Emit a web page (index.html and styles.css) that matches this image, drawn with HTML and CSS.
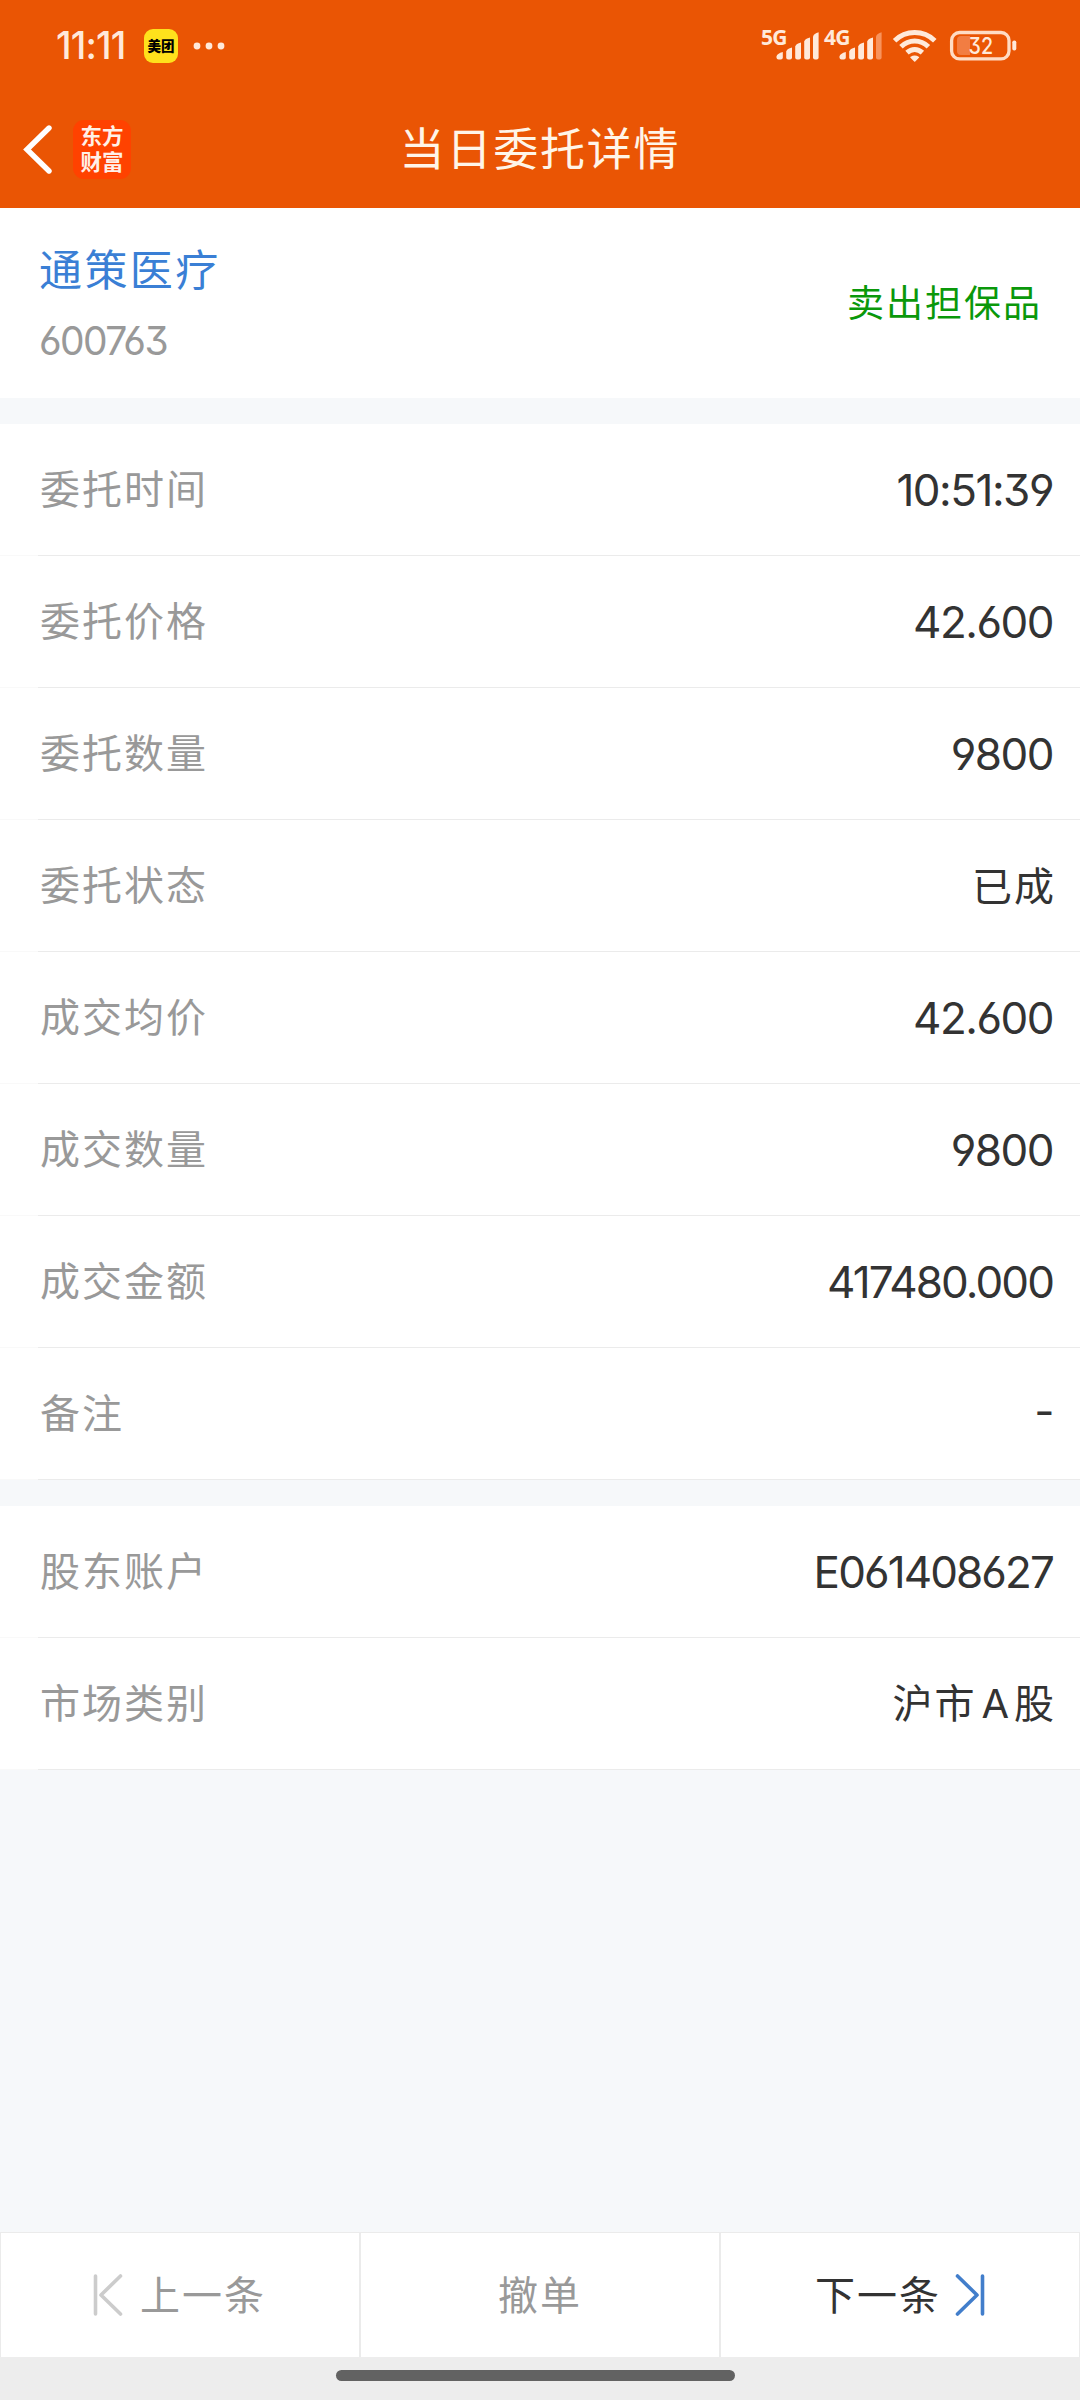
FILE: index.html
```html
<!DOCTYPE html>
<html lang="zh-CN">
<head>
<meta charset="utf-8">
<title>当日委托详情</title>
<link rel="stylesheet" href="styles.css">
</head>
<body>
<div class="screen">
  <header class="top">
    <div class="status">
      <div class="status-left">
        <span class="clock">11:11</span>
        <span class="meituan">美团</span>
        <svg class="dots" width="32" height="8" viewBox="0 0 32 8"><circle cx="4" cy="4" r="3.4"/><circle cx="16" cy="4" r="3.4"/><circle cx="28" cy="4" r="3.4"/></svg>
      </div>
      <svg class="status-right" width="260" height="52" viewBox="760 20 260 52">
        <g class="net"><text x="761" y="45" textLength="26.5">5G</text><text x="824" y="45" textLength="26.5">4G</text></g>
        <g class="bars">
          <path d="M776.5 56.5Q777 53.5 782.8 52V57.5Q782.8 59.5 780.8 59.5H778.5Q776.5 59.5 776.5 57.5Z"/>
          <path d="M786.2 51.5Q787 48.5 792 47.5V57.5Q792 59.5 790 59.5H788.2Q786.2 59.5 786.2 57.5Z"/>
          <path d="M795.2 46.5Q796 43.5 801 42.5V57.5Q801 59.5 799 59.5H797.2Q795.2 59.5 795.2 57.5Z"/>
          <path d="M804.2 41.5Q805 38.5 810 37.5V57.5Q810 59.5 808 59.5H806.2Q804.2 59.5 804.2 57.5Z"/>
          <path d="M813 36.5Q814 33.5 818.6 32.3V57.5Q818.6 59.5 816.6 59.5H815Q813 59.5 813 57.5Z"/>
          <path d="M839.5 56.5Q840 53.5 845.8 52V57.5Q845.8 59.5 843.8 59.5H841.5Q839.5 59.5 839.5 57.5Z"/>
          <path d="M849.2 51.5Q850 48.5 855 47.5V57.5Q855 59.5 853 59.5H851.2Q849.2 59.5 849.2 57.5Z"/>
          <path d="M858.2 46.5Q859 43.5 864 42.5V57.5Q864 59.5 862 59.5H860.2Q858.2 59.5 858.2 57.5Z"/>
          <path d="M867.2 41.5Q868 38.5 873 37.5V57.5Q873 59.5 871 59.5H869.2Q867.2 59.5 867.2 57.5Z"/>
          <path class="dim" d="M876 36.5Q877 33.5 881.6 32.3V57.5Q881.6 59.5 879.6 59.5H878Q876 59.5 876 57.5Z"/>
        </g>
        <g class="wifi">
          <path d="M894.6 40.8Q903 32.6 914.7 32.6T934.8 40.8"/>
          <path d="M901 46.8Q907 41 914.7 41T928.4 46.8"/>
          <path d="M907 52.6Q910.5 49.4 914.7 49.4T922.4 52.6"/>
          <path class="wifi-dot" d="M911 57.3Q914.7 55.4 918.4 57.3L914.7 61Z"/>
        </g>
        <rect class="cell" x="951.6" y="32.5" width="57.4" height="26.4" rx="8"/>
        <path class="charge" d="M961 36H970V55H961Q957 55 957 51V40Q957 36 961 36Z"/>
        <rect class="tip" x="1012.3" y="40.5" width="4" height="10" rx="1.8"/>
        <text class="level" x="968.6" y="54" textLength="24.5" lengthAdjust="spacingAndGlyphs">32</text>
      </svg>
    </div>
    <div class="nav">
      <div class="nav-left">
        <svg class="back" width="30" height="50" viewBox="0 0 30 50"><path d="M26 4L4 25.5L26 47"/></svg>
        <span class="app">东方财富</span>
      </div>
      <h1 class="title">当日委托详情</h1>
      <div class="nav-right"></div>
    </div>
  </header>

  <section class="stock">
    <div class="stock-id">
      <span class="stock-name">通策医疗</span>
      <span class="stock-code">600763</span>
    </div>
    <span class="side">卖出担保品</span>
  </section>

  <section class="group">
    <div class="row"><span class="label">委托时间</span><span class="value">10:51:39</span></div>
    <div class="row"><span class="label">委托价格</span><span class="value">42.600</span></div>
    <div class="row"><span class="label">委托数量</span><span class="value">9800</span></div>
    <div class="row"><span class="label">委托状态</span><span class="value han">已成</span></div>
    <div class="row"><span class="label">成交均价</span><span class="value">42.600</span></div>
    <div class="row"><span class="label">成交数量</span><span class="value">9800</span></div>
    <div class="row"><span class="label">成交金额</span><span class="value long">417480.000</span></div>
    <div class="row"><span class="label">备注</span><span class="value dash">-</span></div>
  </section>

  <section class="group">
    <div class="row"><span class="label">股东账户</span><span class="value long">E061408627</span></div>
    <div class="row"><span class="label">市场类别</span><span class="value han">沪市<span class="latin">A</span>股</span></div>
  </section>

  <footer class="actions">
    <div class="action prev">
      <svg class="step" width="32" height="44" viewBox="0 0 32 44"><path d="M3.5 3V41M28.5 3L9 22L28.5 41"/></svg>
      <span>上一条</span>
    </div>
    <div class="action"><span>撤单</span></div>
    <div class="action next">
      <span>下一条</span>
      <svg class="step" width="32" height="44" viewBox="0 0 32 44"><path d="M28.5 3V41M3.5 3L23 22L3.5 41"/></svg>
    </div>
  </footer>
  <div class="home"><div class="home-bar"></div></div>
</div>
</body>
</html>
```
FILE: styles.css
```css
* { box-sizing: border-box; }

body {
  margin: 0;
  background: #f6f8fa;
  font-family: "Noto Sans CJK SC", sans-serif;
  color: #333;
}

.screen {
  display: flex;
  flex-direction: column;
  width: 1080px;
  height: 2400px;
  overflow: hidden;
}

/* orange header */
.top { height: 208px; background: #ea5504; }

.status {
  display: flex;
  justify-content: space-between;
  height: 92px;
  padding: 0 60px 0 56px;
  align-items: center;
}
.status-left { display: flex; align-items: center; }
.clock {
  width: 88px;
  font: 500 37.5px/40px Inter, sans-serif;
  letter-spacing: -0.8px;
  color: #ffe9da;
}
.meituan {
  width: 34px;
  height: 34px;
  border-radius: 9px;
  background: #ffe11c;
  color: #000;
  font-size: 13.5px;
  font-weight: 900;
  line-height: 33px;
  text-align: center;
}
.dots { margin-left: 15px; fill: #ffe9da; }

.net { font: 700 21px "Noto Sans", sans-serif; fill: #ffe9da; }
.bars { fill: #ffe9da; }
.bars .dim { fill: #f8935c; }
.wifi { fill: none; stroke: #ffe9da; stroke-width: 5; }
.wifi .wifi-dot { fill: #ffe9da; stroke-width: 1.5; stroke-linejoin: round; }
.cell { fill: none; stroke: #ffdcc4; stroke-width: 3.3; }
.charge { fill: #f27d42; }
.tip { fill: #ffe9da; }
.level { font: 500 23px Inter, sans-serif; font-feature-settings: "cv09"; fill: #ffe9da; }

.nav {
  display: grid;
  grid-template-columns: 1fr auto 1fr;
  align-items: center;
  height: 114px;
}
.nav-left { display: flex; align-items: center; gap: 20px; padding-left: 23px; }
.back path { fill: none; stroke: #fff; stroke-width: 5.4; stroke-linecap: round; }
.app {
  width: 58px;
  height: 59px;
  padding: 2px 7px 0;
  border-radius: 11px;
  background: #ff4200;
  color: #fff0e8;
  font-size: 21.5px;
  font-weight: 700;
  line-height: 26px;
  text-align: center;
}
.title {
  margin: 0;
  padding-bottom: 4px;
  color: #fff5e8;
  font-size: 45px;
  font-weight: 400;
  line-height: 60px;
  letter-spacing: 1.8px;
}

/* stock summary */
.stock {
  display: flex;
  justify-content: space-between;
  align-items: center;
  height: 190px;
  padding: 0 38px 0 39px;
  background: #fff;
}
.stock-id { display: flex; flex-direction: column; gap: 18px; padding-top: 2px; }
.stock-name { color: #3a7fd5; font-size: 43px; line-height: 56px; letter-spacing: 2.4px; }
.stock-code {
  color: #999;
  font: 400 39px/56px Inter, sans-serif;
  font-feature-settings: "cv03", "cv04", "cv09";
  letter-spacing: -1.6px;
}
.side { padding-bottom: 4px; color: #0a980a; font-size: 37px; letter-spacing: 2px; }

/* detail rows */
.group { margin-top: 26px; background: #fff; }
.row {
  display: flex;
  justify-content: space-between;
  align-items: center;
  height: 132px;
  padding: 0 26px 0 40px;
  border-bottom: 1px solid;
  border-image: linear-gradient(to right, #f9f9f9 39px, #ebebeb 39px) 1;
}
.label { padding-bottom: 6px; color: #999; font-size: 40px; letter-spacing: 2px; }
.value {
  margin-right: 1px;
  font: 400 44px/60px Inter, sans-serif;
  font-feature-settings: "cv03", "cv04", "cv09";
  letter-spacing: -1.5px;
}
.value.long { letter-spacing: -1.9px; }
.value.dash { padding-bottom: 6px; }
.value.han {
  margin-right: -2px;
  padding-bottom: 3px;
  font: 400 40px/60px "Noto Sans CJK SC", sans-serif;
  letter-spacing: 2px;
}
.latin { margin: 0 5px; font-family: Inter, sans-serif; letter-spacing: 0; }

/* bottom buttons */
.actions {
  display: grid;
  grid-template-columns: repeat(3, 1fr);
  height: 125px;
  margin-top: auto;
  border-top: 1px solid #ebebeb;
  background: #fff;
}
.action {
  display: flex;
  justify-content: center;
  align-items: center;
  gap: 14px;
  border: solid #ebebeb;
  border-width: 0 1px;
  color: #999;
  font-size: 40px;
  letter-spacing: 2px;
}
.action span { padding-bottom: 5px; }
.action.prev { gap: 16px; padding-right: 2px; }
.action.next { gap: 13px; padding-left: 1px; color: #333; }
.step { fill: none; stroke: #ccc; stroke-width: 3.6; stroke-linecap: round; stroke-linejoin: round; }
.next .step { stroke: #427ecb; }

.home { height: 43px; padding-top: 13px; background: #ededed; }
.home-bar { width: 399px; height: 11px; margin-left: 336px; border-radius: 6px; background: #626262; }
```
